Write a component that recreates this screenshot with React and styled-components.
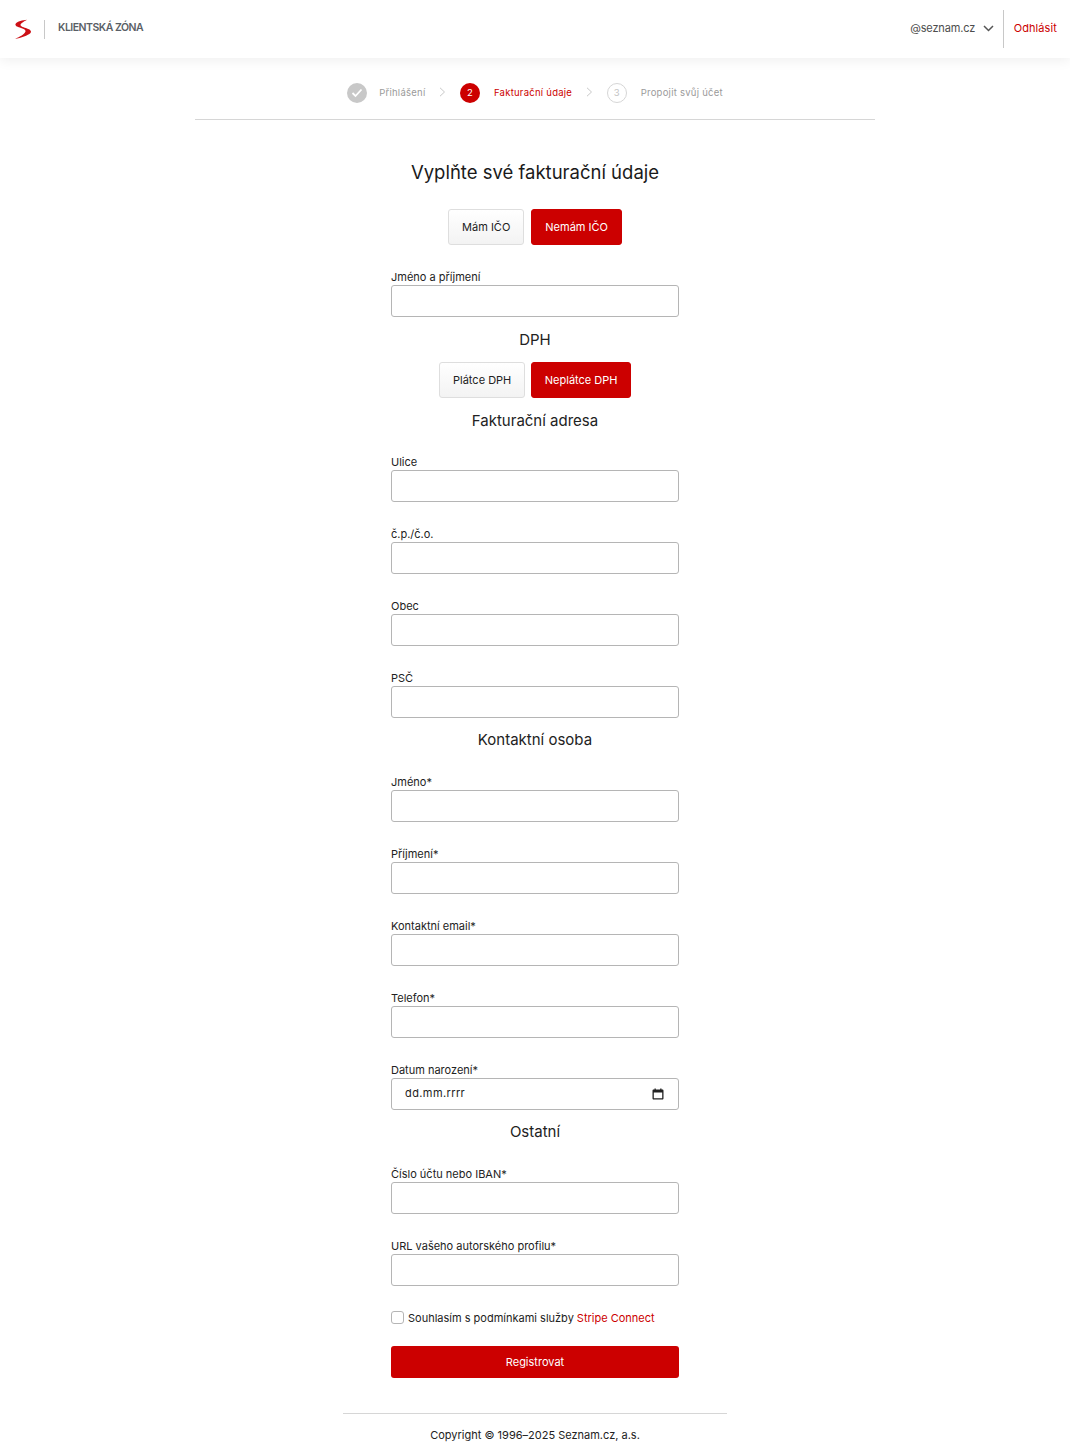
import styled, { createGlobalStyle } from "styled-components";

const RED = "#cc0000";

const GlobalStyle = createGlobalStyle`
  html, body {
    margin: 0;
    padding: 0;
    background: #fff;
    font-family: "Inter", "Liberation Sans", Arial, sans-serif;
    color: #1a1a1a;
  }
  * {
    box-sizing: border-box;
  }
`;

const Page = styled.div`
  display: flex;
  flex-direction: column;
  align-items: center;
  min-height: 1456px;
`;

const Header = styled.header`
  align-self: stretch;
  height: 58px;
  display: flex;
  align-items: center;
  justify-content: space-between;
  padding: 0 13px 0 14px;
  background: #fff;
  box-shadow: 0 2px 12px rgba(0, 0, 0, 0.07);
`;

const Brand = styled.div`
  display: flex;
  align-items: center;
`;

const Logo = styled.svg`
  width: 18px;
  height: 20px;
`;

const BrandDivider = styled.div`
  width: 1px;
  height: 19px;
  margin: 0 13px 0 12px;
  background: #c8c8c8;
`;

const BrandName = styled.span`
  margin-top: -4px;
  font-size: 10.5px;
  font-weight: 600;
  letter-spacing: -0.5px;
  color: #5a5f66;
`;

const Account = styled.div`
  display: flex;
  align-items: center;
  height: 38px;
`;

const Email = styled.span`
  margin-top: -2px;
  font-size: 11px;
  letter-spacing: -0.15px;
  color: #4d4d4d;
`;

const Chevron = styled.svg`
  width: 11px;
  height: 7px;
  margin: -2px 9px 0 8px;
`;

const AccountDivider = styled.div`
  width: 1px;
  height: 38px;
  margin-right: 9.5px;
  background: #c8c8c8;
`;

const Logout = styled.a`
  margin-top: -2px;
  font-size: 11px;
  letter-spacing: 0.1px;
  color: ${RED};
`;

const Steps = styled.nav`
  width: 680px;
  height: 62px;
  display: flex;
  align-items: center;
  justify-content: center;
  padding-top: 8px;
  border-bottom: 1px solid #d6d6d6;
`;

const Circle = styled.span`
  width: 20px;
  height: 20px;
  display: flex;
  align-items: center;
  justify-content: center;
  flex: none;
  border-radius: 50%;
  font-size: 9.5px;
  background: ${(p) => (p.$state === "done" ? "#c8c8c8" : p.$state === "active" ? RED : "#fff")};
  color: ${(p) => (p.$state === "active" ? "#fff" : "#c4c4c4")};
  border: ${(p) => (p.$state === "todo" ? "1px solid #d6d6d6" : "none")};
`;

const StepLabel = styled.span`
  margin-left: ${(p) => p.$gap || "14px"};
  font-size: 9.5px;
  letter-spacing: 0.25px;
  color: ${(p) => (p.$active ? RED : "#9a9a9a")};
`;

const StepArrow = styled.svg`
  width: 7px;
  height: 10px;
  margin: -2px 13.5px 0 14px;
`;

const Form = styled.form`
  width: 288px;
  display: flex;
  flex-direction: column;
`;

const Title = styled.h1`
  margin: 40px 0 25px;
  font-size: 18.5px;
  line-height: 24px;
  font-weight: 400;
  text-align: center;
  color: #1a1a1a;
`;

const SectionTitle = styled.h2`
  margin: ${(p) => p.$margin};
  font-size: 15px;
  line-height: 18px;
  font-weight: 400;
  text-align: center;
  color: #222;
`;

const Toggle = styled.div`
  display: flex;
  justify-content: center;
  gap: ${(p) => p.$gap || "7px"};
  margin-bottom: ${(p) => p.$bottom};
`;

const ToggleButton = styled.button`
  height: 36px;
  padding: 0 ${(p) => p.$pad || "13px"};
  border-radius: 3px;
  font: inherit;
  font-size: 11px;
  border: 1px solid ${(p) => (p.$active ? RED : "#dedede")};
  background: ${(p) => (p.$active ? RED : "linear-gradient(#fff, #f3f3f3)")};
  color: ${(p) => (p.$active ? "#fff" : "#222")};
`;

const Field = styled.label`
  display: block;
  margin-bottom: ${(p) => p.$bottom || "24px"};
`;

const FieldLabel = styled.span`
  display: block;
  height: 16px;
  font-size: 11px;
  line-height: 16px;
  color: #222;
`;

const Input = styled.input`
  display: block;
  width: 100%;
  height: 32px;
  padding: 0 13px;
  border: 1px solid #b5b5b5;
  border-radius: 3px;
  background: #fff;
  font: inherit;
  font-size: 11px;
  outline: none;
`;

const DateBox = styled.div`
  height: 32px;
  display: flex;
  align-items: center;
  justify-content: space-between;
  padding: 0 14px 2px 13px;
  border: 1px solid #b5b5b5;
  border-radius: 3px;
  font-size: 11px;
  letter-spacing: 0.4px;
  color: #222;
`;

const CalendarIcon = styled.svg`
  width: 12px;
  height: 12px;
  margin-top: 2px;
`;

const Consent = styled.div`
  display: flex;
  align-items: center;
  height: 16px;
  margin-bottom: 20px;
  font-size: 11px;
  color: #222;
`;

const Checkbox = styled.span`
  width: 13px;
  height: 13px;
  margin: -2px 4px 0 0;
  flex: none;
  border: 1px solid #b5b5b5;
  border-radius: 3px;
  background: #fff;
`;

const TextLink = styled.a`
  margin-left: 3px;
  color: ${RED};
`;

const Submit = styled.button`
  width: 100%;
  height: 32px;
  border: none;
  border-radius: 3px;
  background: ${RED};
  color: #fff;
  font: inherit;
  font-size: 11px;
`;

const Footer = styled.footer`
  width: 384px;
  margin-top: 35px;
  padding-top: 14px;
  border-top: 1px solid #d6d6d6;
  font-size: 11px;
  line-height: 14px;
  text-align: center;
  color: #222;
`;

const addressFields = ["Ulice", "č.p./č.o.", "Obec"];
const contactFields = ["Jméno*", "Příjmení*", "Kontaktní email*", "Telefon*"];

const TextField = ({ label, bottom }) => (
  <Field $bottom={bottom}>
    <FieldLabel>{label}</FieldLabel>
    <Input type="text" />
  </Field>
);

const Arrow = () => (
  <StepArrow viewBox="0 0 7 10" fill="none" stroke="#c8c8c8">
    <path d="M1 0.8L5.5 5 1 9.2" />
  </StepArrow>
);

export default function App() {
  return (
    <Page>
      <GlobalStyle />
      <Header>
        <Brand>
          <Logo viewBox="0 0 18 20">
            <path
              d="M13 0.8C9 1 3 2.4 1.5 5 0.8 7 4 8 7 9c3 1 5 2 4.5 3.5C10.5 15 6 18 1 19.8 7 19 14 16.5 16.5 14 18 12 16 10.5 13 9.5 10 8.5 6.5 7.5 6.5 6 6.5 4.5 10 2.5 13 0.8z"
              fill="#cc1016"
            />
          </Logo>
          <BrandDivider />
          <BrandName>KLIENTSKÁ ZÓNA</BrandName>
        </Brand>
        <Account>
          <Email>@seznam.cz</Email>
          <Chevron viewBox="0 0 11 7" fill="none" stroke="#555" strokeWidth="1.5">
            <path d="M1 1l4.5 4.5L10 1" />
          </Chevron>
          <AccountDivider />
          <Logout>Odhlásit</Logout>
        </Account>
      </Header>

      <Steps>
        <Circle $state="done">
          <svg width="12" height="10" viewBox="0 0 12 10" fill="none" stroke="#fff" strokeWidth="1.8">
            <path d="M1.5 5l3 3 6-6.5" />
          </svg>
        </Circle>
        <StepLabel $gap="12px">Přihlášení</StepLabel>
        <Arrow />
        <Circle $state="active">2</Circle>
        <StepLabel $active>Fakturační údaje</StepLabel>
        <Arrow />
        <Circle $state="todo">3</Circle>
        <StepLabel>Propojit svůj účet</StepLabel>
      </Steps>

      <Form>
        <Title>Vyplňte své fakturační údaje</Title>
        <Toggle $bottom="24px">
          <ToggleButton type="button">Mám IČO</ToggleButton>
          <ToggleButton type="button" $active>Nemám IČO</ToggleButton>
        </Toggle>
        <TextField label="Jméno a příjmení" bottom="14px" />

        <SectionTitle $margin="0 0 13px">DPH</SectionTitle>
        <Toggle $bottom="14px" $gap="6px">
          <ToggleButton type="button">Plátce DPH</ToggleButton>
          <ToggleButton type="button" $active $pad="12.5px">Neplátce DPH</ToggleButton>
        </Toggle>

        <SectionTitle $margin="0 0 24px">Fakturační adresa</SectionTitle>
        {addressFields.map((label) => (
          <TextField key={label} label={label} />
        ))}
        <TextField label="PSČ" bottom="13px" />

        <SectionTitle $margin="0 0 25px">Kontaktní osoba</SectionTitle>
        {contactFields.map((label) => (
          <TextField key={label} label={label} />
        ))}
        <Field $bottom="13px">
          <FieldLabel>Datum narození*</FieldLabel>
          <DateBox>
            dd.mm.rrrr
            <CalendarIcon viewBox="0 0 12 12">
              <path
                fillRule="evenodd"
                d="M2.5 0.5h1.3v1h4.4v-1h1.3v1h1c.5 0 1 .5 1 1v8c0 .5-.5 1-1 1h-9c-.5 0-1-.5-1-1v-8c0-.5.5-1 1-1h1zM1.8 4.5v5.7h8.4V4.5z"
                fill="#222"
              />
            </CalendarIcon>
          </DateBox>
        </Field>

        <SectionTitle $margin="0 0 25px">Ostatní</SectionTitle>
        <TextField label="Číslo účtu nebo IBAN*" />
        <TextField label="URL vašeho autorského profilu*" />

        <Consent>
          <Checkbox />
          Souhlasím s podmínkami služby
          <TextLink>Stripe Connect</TextLink>
        </Consent>
        <Submit type="button">Registrovat</Submit>
      </Form>

      <Footer>Copyright © 1996–2025 Seznam.cz, a.s.</Footer>
    </Page>
  );
}
